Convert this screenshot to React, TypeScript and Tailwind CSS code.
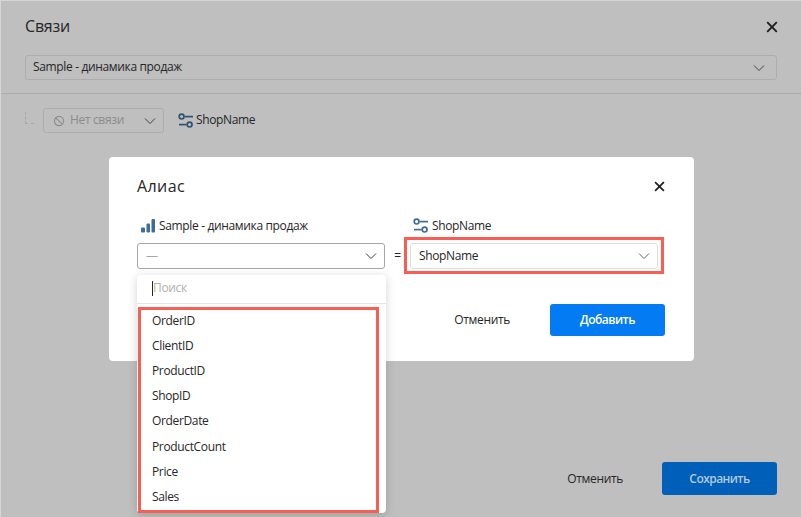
import React from "react";

const font = { fontFamily: '"Open Sans", "Noto Sans", sans-serif' };

function Chevron({ className = "" }: { className?: string }) {
  return (
    <svg width="16" height="16" viewBox="0 0 16 16" fill="none" className={className}>
      <path d="M3 5.5 L8 10.5 L13 5.5" stroke="currentColor" strokeWidth="1" />
    </svg>
  );
}

function Close({ size = 12, className = "" }: { size?: number; className?: string }) {
  return (
    <svg width={size} height={size} viewBox="0 0 12 12" fill="none" className={className}>
      <path d="M1.2 1.2 L10.8 10.8 M10.8 1.2 L1.2 10.8" stroke="currentColor" strokeWidth="1.9" />
    </svg>
  );
}

function FieldIcon({ color }: { color: string }) {
  return (
    <svg width="16" height="16" viewBox="0 0 16 16" fill="none">
      <circle cx="3.6" cy="3.6" r="2.4" stroke={color} strokeWidth="1.7" />
      <path d="M7 3.6 H15" stroke={color} strokeWidth="1.7" />
      <circle cx="11.6" cy="11.6" r="2.4" stroke={color} strokeWidth="1.7" />
      <path d="M1 11.6 H8.5" stroke={color} strokeWidth="1.7" />
    </svg>
  );
}

function BarsIcon() {
  return (
    <svg width="16" height="16" viewBox="0 0 16 16" fill="#3f6d99">
      <rect x="1" y="9.5" width="4" height="5" rx="1" />
      <rect x="6.5" y="5.5" width="3.5" height="9" rx="1" />
      <rect x="11.5" y="1" width="3.5" height="13.5" rx="1" />
    </svg>
  );
}

function NoLink() {
  return (
    <svg width="12" height="12" viewBox="0 0 12 12" fill="none" stroke="#8f8f8f" strokeWidth="1.2">
      <circle cx="6" cy="6" r="4.6" />
      <path d="M2.8 2.8 L9.2 9.2" />
    </svg>
  );
}

const fields = ["OrderID", "ClientID", "ProductID", "ShopID", "OrderDate", "ProductCount", "Price", "Sales"];

export default function App() {
  return (
    <div style={font} className="relative h-[517px] w-[801px] overflow-hidden bg-[#bfbfbf] text-[12px] tracking-[-0.35px] text-[#262626]">
      {/* Background page */}
      <div className="flex h-[517px] flex-col border-l border-t border-[#d6d6d6]">
        <div className="flex items-center justify-between pl-[24px] pr-[23px] pt-[14px]">
          <h1 className="text-[16px] leading-[22px] font-normal tracking-[-0.2px]">Связи</h1>
          <Close size={12} className="mt-[2px] text-[#1f1f1f]" />
        </div>
        <div className="mt-[18px] px-[24px]">
          <div className="flex h-[25px] w-[752px] items-center justify-between rounded-[3px] border border-[#adadad] pl-[7px] pr-[9px]">
            <span className="-mt-[2px]">Sample - динамика продаж</span>
            <Chevron className="text-[#404040]" />
          </div>
        </div>
        <div className="mt-[13px] h-px w-full bg-[#adadad]" />
        <div className="mt-[14px] flex items-center pl-[24px]">
          <div className="mb-[6px] h-[12px] w-[9px] border-b border-l border-dashed border-[#a8a8a8]" />
          <div className="ml-[9px] flex h-[25px] w-[121px] items-center justify-between rounded-[3px] border border-[#adadad] pl-[9px] pr-[5px] text-[#8c8c8c]">
            <span className="flex items-center gap-[5px]">
              <NoLink />
              <span className="-mt-[2px]">Нет связи</span>
            </span>
            <Chevron className="text-[#404040]" />
          </div>
          <div className="ml-[14px] flex items-center gap-[2px]">
            <FieldIcon color="#2f5270" />
            <span className="-mt-[2px]">ShopName</span>
          </div>
        </div>
        <div className="mt-auto mb-[22px] flex items-center justify-end pr-[24px]">
          <span className="mr-[39px]">Отменить</span>
          <div className="flex h-[33px] w-[115px] items-center justify-center rounded-[3px] bg-[#005fb8] font-semibold tracking-[-0.55px] text-[#b3c9e0]">
            Сохранить
          </div>
        </div>
      </div>

      {/* Alias dialog */}
      <div className="absolute left-[109px] top-[157px] h-[204px] w-[585px] rounded-[4px] bg-white pl-[28px] pr-[29px] pt-[18px]">
        <div className="flex items-center justify-between">
          <h2 className="text-[16px] leading-[22px] font-normal tracking-[0.4px]">Алиас</h2>
          <Close size={11} className="text-[#1f1f1f]" />
        </div>
        <div className="mt-[20px] flex">
          <div className="w-[248px]">
            <div className="flex h-[18px] items-center gap-[3px] pl-[3px]">
              <BarsIcon />
              <span>Sample - динамика продаж</span>
            </div>
            <div className="mt-[8px] flex h-[26px] items-center justify-between rounded-[3px] border border-[#a6a6a6] pl-[8px] pr-[5px] text-[#a6a6a6]">
              <span>—</span>
              <Chevron className="text-[#404040]" />
            </div>
          </div>
          <div className="flex w-[25px] items-end justify-center pb-[4px]">=</div>
          <div className="w-[248px]">
            <div className="flex h-[18px] items-center gap-[3px] pl-[3px]">
              <FieldIcon color="#3f6d99" />
              <span>ShopName</span>
            </div>
            <div className="relative mt-[8px] flex h-[26px] items-center justify-between rounded-[3px] border border-[#dedede] pl-[8px] pr-[5px]">
              <span>ShopName</span>
              <Chevron className="text-[#666666]" />
              <div className="absolute -left-[7px] -right-[7px] -top-[7px] -bottom-[6px] border-[3px] border-[#f95e55]" />
            </div>
          </div>
        </div>
        <div className="mt-[35px] flex items-center justify-end">
          <span className="mr-[40px]">Отменить</span>
          <div className="flex h-[32px] w-[115px] items-center justify-center rounded-[3px] bg-[#027bf3] font-semibold tracking-[-0.5px] text-white">
            Добавить
          </div>
        </div>
      </div>

      {/* Dropdown */}
      <div className="absolute left-[137px] top-[275px] h-[238px] w-[249px] rounded-[4px] bg-white shadow-[0_2px_10px_rgba(0,0,0,0.18)]">
        <div className="flex h-[29px] items-center border-b border-[#e5e5e5] pb-[2px] pl-[15px] text-[#b0b0b0]">
          <span className="h-[15px] w-px bg-[#262626]" />
          Поиск
        </div>
        <div className="relative flex flex-col pt-[4px] pl-[15px]">
          {fields.map((f) => (
            <div key={f} className="flex h-[25.2px] items-center">
              {f}
            </div>
          ))}
          <div className="absolute left-[1px] right-[7px] top-[3px] h-[206px] border-[3px] border-[#f95e55]" />
        </div>
      </div>
    </div>
  );
}
